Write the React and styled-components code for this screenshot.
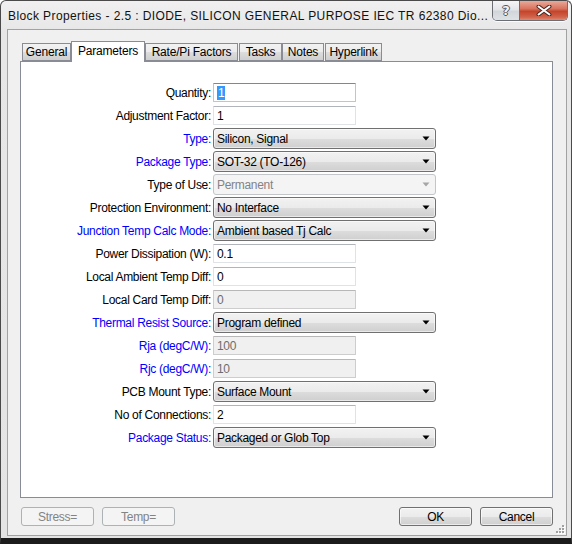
import React from 'react';
import styled, { createGlobalStyle } from 'styled-components';

const Global = createGlobalStyle`
  html, body { margin: 0; padding: 0; background: #ffffff; }
  body { font-family: "Liberation Sans", Arial, sans-serif; }
  * { box-sizing: border-box; }
`;

const UI_FONT = `"Liberation Sans", Arial, sans-serif`;

const Window = styled.div`
  width: 572px;
  height: 544px;
  display: flex;
  flex-direction: column;
  background: linear-gradient(180deg, #f0f0f0 0px, #e7e7e7 30px, #e4e4e4 100%);
  border: 1px solid #4a4a4a;
  border-bottom: 6px solid #1c1c1c;
  border-radius: 6px 6px 0 0;
  position: relative;
`;

const TitleBar = styled.div`
  height: 28px;
  display: flex;
  align-items: flex-start;
  padding-left: 7px;
`;

const TitleText = styled.div`
  align-self: center;
  margin-top: 1px;
  font-family: ${UI_FONT};
  font-size: 12px;
  letter-spacing: 0.4px;
  color: #111;
  white-space: nowrap;
  flex: 1;
  overflow: hidden;
`;

const CaptionButtons = styled.div`
  display: flex;
  margin-right: 3px;
  height: 20px;
  border: 1px solid #6b6f74;
  border-top: none;
  border-radius: 0 0 5px 5px;
  overflow: hidden;
  box-shadow: 0 1px 0 rgba(255,255,255,0.8);
`;

const HelpButton = styled.div`
  width: 27px;
  height: 19px;
  display: flex;
  align-items: center;
  justify-content: center;
  background: linear-gradient(180deg, #f4f5f6 0%, #e3e5e8 45%, #d2d5d9 55%, #dfe2e5 100%);
  border-right: 1px solid #6b6f74;
  font-family: "DejaVu Sans", sans-serif;
  font-weight: bold;
  font-size: 13px;
  color: #f4f4f4;
  text-shadow: -1px 0 #555, 1px 0 #555, 0 -1px #555, 0 1px #555;
`;

const CloseButton = styled.div`
  width: 47px;
  height: 19px;
  display: flex;
  align-items: center;
  justify-content: center;
  background: linear-gradient(180deg, #e9a99a 0%, #d9745f 40%, #c5442b 55%, #d0654c 85%, #e08a70 100%);
`;

const Client = styled.div`
  flex: 1;
  margin: 0 4px 2px 6px;
  border: 1px solid #a2a2a2;
  background: #f0f0f0;
  display: flex;
  flex-direction: column;
  padding: 11px 0 9px 0;
  position: relative;
`;

const TabStrip = styled.div`
  height: 20px;
  display: flex;
  align-items: flex-end;
  margin: 0 13px 0 14px;
  position: relative;
  z-index: 2;
`;

const Tab = styled.div`
  width: ${p => p.$w}px;
  margin-left: ${p => p.$ml || 0}px;
  height: ${p => (p.$active ? 21 : 18)}px;
  margin-bottom: ${p => (p.$active ? -1 : 0)}px;
  border: 1px solid #898c95;
  border-bottom: ${p => (p.$active ? 'none' : '1px solid #898c95')};
  background: ${p => (p.$active ? '#ffffff' : 'linear-gradient(180deg, #f2f2f2 0%, #ebebeb 50%, #dddddd 51%, #cfcfcf 100%)')};
  display: flex;
  justify-content: center;
  align-items: ${p => (p.$active ? 'flex-start' : 'center')};
  padding-top: ${p => (p.$active ? 2 : 0)}px;
  font-family: ${UI_FONT};
  font-size: 12px;
  letter-spacing: -0.2px;
  color: #000;
  white-space: nowrap;
`;

const Panel = styled.div`
  height: 437px;
  margin: 0 13px 0 12px;
  border: 1px solid #898c95;
  background: #ffffff;
  padding-top: 19px;
  display: flex;
  flex-direction: column;
  position: relative;
  z-index: 1;
`;

const Row = styled.div`
  height: 23px;
  display: flex;
  align-items: center;
`;

const Label = styled.div`
  width: 190px;
  text-align: right;
  font-family: ${UI_FONT};
  font-size: 12px;
  letter-spacing: -0.3px;
  color: ${p => (p.$blue ? '#0000ff' : '#000000')};
  margin-right: 2px;
  white-space: nowrap;
`;

const TextBox = styled.div`
  width: 143px;
  height: 19px;
  display: flex;
  align-items: center;
  padding-left: 3px;
  border: 1px solid ${p => (p.$focused ? '#a9cbe9' : p.$disabled ? '#cdcdcd' : '#dfe3e8')};
  border-top-color: ${p => (p.$focused ? '#5b8fc7' : p.$disabled ? '#b7b7b7' : '#b1b5bb')};
  background: ${p => (p.$disabled ? '#f0f0f0' : '#ffffff')};
  border-radius: 1px;
  font-family: ${UI_FONT};
  font-size: 12px;
  letter-spacing: -0.3px;
  color: ${p => (p.$disabled ? '#6d6d6d' : '#000000')};
`;

const Selected = styled.span`
  background: #3399ff;
  color: #ffffff;
  padding: 0 1px;
  line-height: 14px;
`;

const Combo = styled.div`
  width: 223px;
  height: 21px;
  display: flex;
  align-items: center;
  padding: 0 5px 0 3px;
  border: 1px solid ${p => (p.$disabled ? '#c3c6c9' : '#707070')};
  border-radius: 3px;
  background: ${p =>
    p.$disabled
      ? '#f4f4f4'
      : 'linear-gradient(180deg, #f2f2f2 0%, #ebebeb 50%, #dddddd 51%, #cfcfcf 100%)'};
  box-shadow: inset 0 0 0 1px ${p => (p.$disabled ? '#f4f4f4' : 'rgba(255,255,255,0.55)')};
  font-family: ${UI_FONT};
  font-size: 12px;
  letter-spacing: -0.3px;
  color: ${p => (p.$disabled ? '#838383' : '#000000')};
`;

const ComboText = styled.span`
  flex: 1;
  white-space: nowrap;
`;

const Footer = styled.div`
  margin-top: 9px;
  height: 19px;
  display: flex;
  gap: 8px;
  padding: 0 13px 0 13px;
`;

const Spacer = styled.div`
  flex: 1;
`;

const Button = styled.div`
  width: 73px;
  height: 19px;
  display: flex;
  align-items: center;
  justify-content: center;
  border: 1px solid ${p => (p.$disabled ? '#adb2b5' : '#707070')};
  border-radius: 3px;
  background: ${p =>
    p.$disabled
      ? '#f4f4f4'
      : 'linear-gradient(180deg, #f2f2f2 0%, #ebebeb 50%, #dddddd 51%, #cfcfcf 100%)'};
  box-shadow: inset 0 0 0 1px ${p => (p.$disabled ? '#f4f4f4' : 'rgba(255,255,255,0.6)')};
  font-family: ${UI_FONT};
  font-size: 12px;
  letter-spacing: -0.3px;
  color: ${p => (p.$disabled ? '#838383' : '#000000')};
`;

const Grip = styled.svg`
  position: absolute;
  right: 1px;
  bottom: 1px;
`;

const Arrow = ({ disabled }) => (
  <svg width="8" height="5" viewBox="0 0 8 5">
    <polygon points="0.5,0.5 7.5,0.5 4,4.5" fill={disabled ? '#a6a6a6' : '#000'} />
  </svg>
);

const rows = [
  { label: 'Quantity', kind: 'text', value: '1', focused: true },
  { label: 'Adjustment Factor', kind: 'text', value: '1' },
  { label: 'Type', blue: true, kind: 'combo', value: 'Silicon, Signal' },
  { label: 'Package Type', blue: true, kind: 'combo', value: 'SOT-32 (TO-126)' },
  { label: 'Type of Use', kind: 'combo', value: 'Permanent', disabled: true },
  { label: 'Protection Environment', kind: 'combo', value: 'No Interface' },
  { label: 'Junction Temp Calc Mode', blue: true, kind: 'combo', value: 'Ambient based Tj Calc' },
  { label: 'Power Dissipation (W)', kind: 'text', value: '0.1' },
  { label: 'Local Ambient Temp Diff', kind: 'text', value: '0' },
  { label: 'Local Card Temp Diff', kind: 'text', value: '0', disabled: true },
  { label: 'Thermal Resist Source', blue: true, kind: 'combo', value: 'Program defined' },
  { label: 'Rja (degC/W)', blue: true, kind: 'text', value: '100', disabled: true },
  { label: 'Rjc (degC/W)', blue: true, kind: 'text', value: '10', disabled: true },
  { label: 'PCB Mount Type', kind: 'combo', value: 'Surface Mount' },
  { label: 'No of Connections', kind: 'text', value: '2' },
  { label: 'Package Status', blue: true, kind: 'combo', value: 'Packaged or Glob Top' },
];

const tabs = [
  { name: 'General', w: 49 },
  { name: 'Parameters', w: 74, active: true },
  { name: 'Rate/Pi Factors', w: 93 },
  { name: 'Tasks', w: 43, ml: 1 },
  { name: 'Notes', w: 42 },
  { name: 'Hyperlink', w: 57, ml: 1 },
];

export default function App() {
  return (
    <>
      <Global />
      <Window>
        <TitleBar>
          <TitleText>Block Properties - 2.5 : DIODE, SILICON GENERAL PURPOSE IEC TR 62380 Dio...</TitleText>
          <CaptionButtons>
            <HelpButton>?</HelpButton>
            <CloseButton>
              <svg width="16" height="11" viewBox="0 0 16 11">
                <path d="M2.5 1.5 L13.5 9.5 M13.5 1.5 L2.5 9.5" stroke="#4a2a25" strokeWidth="4" strokeLinecap="round" />
                <path d="M2.5 1.5 L13.5 9.5 M13.5 1.5 L2.5 9.5" stroke="#ffffff" strokeWidth="2" strokeLinecap="round" />
              </svg>
            </CloseButton>
          </CaptionButtons>
        </TitleBar>
        <Client>
          <TabStrip>
            {tabs.map(t => (
              <Tab key={t.name} $w={t.w} $ml={t.ml} $active={t.active}>
                {t.name}
              </Tab>
            ))}
          </TabStrip>
          <Panel>
            {rows.map(r => (
              <Row key={r.label}>
                <Label $blue={r.blue}>{r.label}:</Label>
                {r.kind === 'text' ? (
                  <TextBox $focused={r.focused} $disabled={r.disabled}>
                    {r.focused ? <Selected>{r.value}</Selected> : r.value}
                  </TextBox>
                ) : (
                  <Combo $disabled={r.disabled}>
                    <ComboText>{r.value}</ComboText>
                    <Arrow disabled={r.disabled} />
                  </Combo>
                )}
              </Row>
            ))}
          </Panel>
          <Footer>
            <Button $disabled>Stress=</Button>
            <Button $disabled>Temp=</Button>
            <Spacer />
            <Button>OK</Button>
            <Button>Cancel</Button>
          </Footer>
          <Grip width="10" height="10" viewBox="0 0 10 10">
            {[[7, 1], [7, 4], [4, 4], [7, 7], [4, 7], [1, 7]].map(([x, y]) => (
              <g key={`${x}-${y}`}>
                <rect x={x + 1} y={y + 1} width="2" height="2" fill="#ffffff" />
                <rect x={x} y={y} width="2" height="2" fill="#a0a0a0" />
              </g>
            ))}
          </Grip>
        </Client>
      </Window>
    </>
  );
}
